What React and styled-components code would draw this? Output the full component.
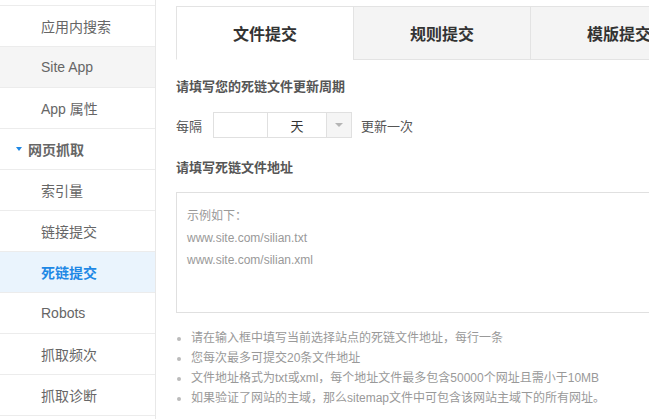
import React from 'react'
import styled, { createGlobalStyle } from 'styled-components';

const menu = [
  { id: 1, label: '应用内搜索' },
  { id: 2, label: 'Site App', hover: true },
  { id: 3, label: 'App 属性' },
  { id: 4, label: '网页抓取', group: true },
  { id: 5, label: '索引量' },
  { id: 6, label: '链接提交' },
  { id: 7, label: '死链提交', active: true },
  { id: 8, label: 'Robots' },
  { id: 9, label: '抓取频次' },
  { id: 10, label: '抓取诊断' },
];

const tabs = ['文件提交', '规则提交', '模版提交'];

const tips = [
  '请在输入框中填写当前选择站点的死链文件地址，每行一条',
  '您每次最多可提交20条文件地址',
  '文件地址格式为txt或xml，每个地址文件最多包含50000个网址且需小于10MB',
  '如果验证了网站的主域，那么sitemap文件中可包含该网站主域下的所有网址。',
];

export default function App() {
  return (
    <Page>
      <Global />
      <Sidebar>
        {menu.map((m) => (
          <MenuItem key={m.id} $hover={m.hover} $active={m.active} $group={m.group}>
            {m.group && <Caret />}
            {m.label}
          </MenuItem>
        ))}
      </Sidebar>
      <Main>
        <Tabs>
          {tabs.map((t, i) => (
            <Tab key={t} $selected={i === 0}>{t}</Tab>
          ))}
        </Tabs>
        <Title>请填写您的死链文件更新周期</Title>
        <Row>
          <span>每隔</span>
          <Picker>
            <NumberBox />
            <UnitBox>天</UnitBox>
            <ArrowBox><Caret $gray /></ArrowBox>
          </Picker>
          <span>更新一次</span>
        </Row>
        <Title>请填写死链文件地址</Title>
        <AddressBox>
          <div>示例如下：</div>
          <div>www.site.com/silian.txt</div>
          <div>www.site.com/silian.xml</div>
        </AddressBox>
        <Tips>
          {tips.map((t) => <li key={t}>{t}</li>)}
        </Tips>
      </Main>
    </Page>
  )
}

const Global = createGlobalStyle`
  html, body {
    margin: 0;
    padding: 0;
    background: #fff;
    overflow: hidden;
  }
  body {
    font-family: "Liberation Sans", Arial, "Noto Sans CJK SC", sans-serif;
  }
`

const Page = styled.div`
  display: flex;
  width: 649px;
  height: 419px;
  overflow: hidden;
`

const Sidebar = styled.ul`
  list-style: none;
  margin: 0;
  padding: 5px 0 0;
  width: 155px;
  flex-shrink: 0;
  border-right: 1px solid #e8e8e8;
  box-sizing: content-box;
  li:first-child {
    border-top: 1px solid #ececec;
  }
`

const MenuItem = styled.li`
  height: 40px;
  display: flex;
  align-items: center;
  padding-left: ${(p) => (p.$group ? '16px' : '41px')};
  border-bottom: 1px solid #ececec;
  font-size: 14px;
  color: ${(p) => (p.$active ? '#1e88e5' : '#666')};
  font-weight: ${(p) => (p.$active || p.$group ? 'bold' : 'normal')};
  background: ${(p) => (p.$active ? '#eaf4fd' : p.$hover ? '#f5f5f5' : '#fff')};
`

const Caret = styled.span`
  width: 0;
  height: 0;
  border-left: ${(p) => (p.$gray ? '4px' : '3.5px')} solid transparent;
  border-right: ${(p) => (p.$gray ? '4px' : '3.5px')} solid transparent;
  border-top: 4px solid ${(p) => (p.$gray ? '#b5b5b5' : '#1e88e5')};
  margin-right: ${(p) => (p.$gray ? '0' : '6px')};
`

const Main = styled.div`
  flex: 1;
  padding: 6px 0 0 20px;
  min-width: 0;
  color: #555;
`

const Tabs = styled.div`
  display: flex;
  height: 54px;
`

const Tab = styled.div`
  width: 177px;
  flex-shrink: 0;
  box-sizing: border-box;
  display: flex;
  align-items: center;
  justify-content: center;
  font-size: 16px;
  font-weight: bold;
  color: #333;
  border-top: 1px solid #e3e3e3;
  border-left: 1px solid #e3e3e3;
  border-bottom: 1px solid ${(p) => (p.$selected ? 'transparent' : '#e3e3e3')};
  background: ${(p) => (p.$selected ? '#fff' : '#f4f4f4')};
  white-space: nowrap;
`

const Title = styled.div`
  font-size: 13px;
  font-weight: bold;
  color: #555;
  margin: 18px 0 0;
  line-height: 17px;
`

const Row = styled.div`
  display: flex;
  align-items: center;
  gap: 9px;
  margin: 17px 0 21px;
  font-size: 13px;
  color: #555;
`

const Picker = styled.div`
  display: flex;
  height: 26px;
  border: 1px solid #e0e0e0;
  box-sizing: border-box;
  margin-left: 2px;
`

const NumberBox = styled.div`
  width: 53px;
  border-right: 1px solid #e0e0e0;
`

const UnitBox = styled.div`
  width: 58px;
  display: flex;
  align-items: center;
  justify-content: center;
  border-right: 1px solid #e0e0e0;
  color: #333;
`

const ArrowBox = styled.div`
  width: 24px;
  display: flex;
  align-items: center;
  justify-content: center;
  background: #f5f5f5;
`

const AddressBox = styled.div`
  margin-top: 16px;
  height: 121px;
  box-sizing: border-box;
  border: 1px solid #e0e0e0;
  border-right: none;
  padding: 12px 10px;
  font-size: 12px;
  line-height: 22px;
  color: #999;
`

const Tips = styled.ul`
  margin: 15px 0 0;
  padding: 0 0 0 15px;
  font-size: 12px;
  line-height: 20px;
  color: #999;
  white-space: nowrap;
  li::marker {
    color: #bbb;
  }
`
